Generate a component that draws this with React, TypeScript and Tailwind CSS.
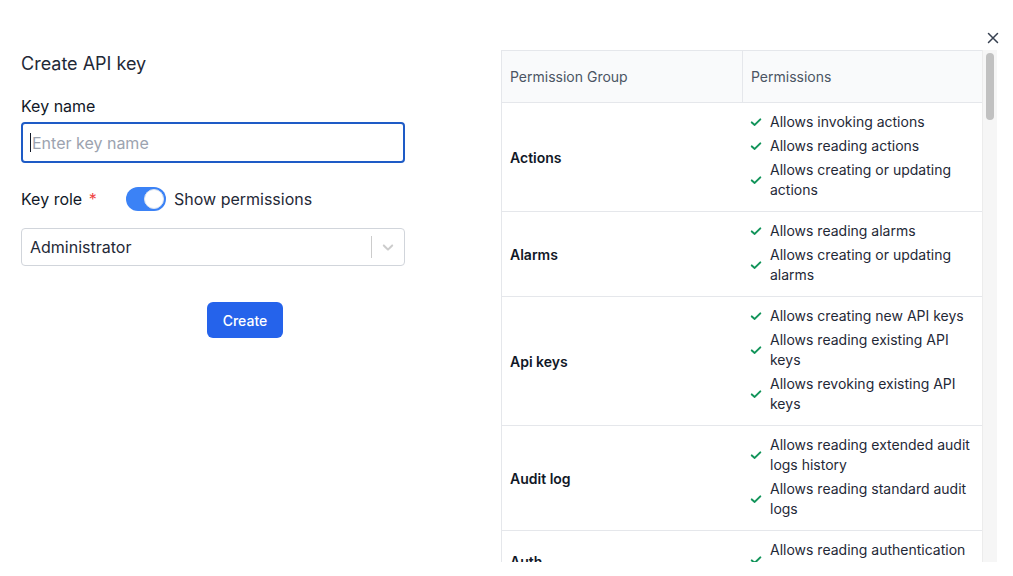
import React from "react";

const groups: { name: string; perms: string[] }[] = [
  {
    name: "Actions",
    perms: ["Allows invoking actions", "Allows reading actions", "Allows creating or updating actions"],
  },
  { name: "Alarms", perms: ["Allows reading alarms", "Allows creating or updating alarms"] },
  {
    name: "Api keys",
    perms: ["Allows creating new API keys", "Allows reading existing API keys", "Allows revoking existing API keys"],
  },
  {
    name: "Audit log",
    perms: ["Allows reading extended audit logs history", "Allows reading standard audit logs"],
  },
  { name: "Auth", perms: ["Allows reading authentication settings"] },
  { name: "Billing", perms: ["Allows reading billing information", "Allows updating billing information"] },
];

function Check() {
  return (
    <svg width="12" height="12" viewBox="0 0 12 12" className="shrink-0">
      <path d="M1.8 6.4 L4.7 8.9 L10.3 3.4" fill="none" stroke="#12945a" strokeWidth="2" strokeLinecap="round" strokeLinejoin="round" />
    </svg>
  );
}

export default function App() {
  return (
    <div
      className="relative w-[1013px] h-[576px] bg-white overflow-hidden text-[#1f2937]"
      style={{ fontFamily: "Inter, 'Noto Sans', sans-serif" }}
    >
      <button className="absolute left-[987px] top-[32px] w-3 h-3 flex items-center justify-center">
        <svg width="12" height="12" viewBox="0 0 12 12">
          <path d="M1.5 1.5 L10.5 10.5 M10.5 1.5 L1.5 10.5" stroke="#374151" strokeWidth="1.5" strokeLinecap="round" />
        </svg>
      </button>
      <div className="flex">
        <div className="w-[490px] shrink-0 pt-[50px]">
          <div className="pl-[21px] w-[405px]">
            <h2 className="text-[18px] leading-[28px] text-[#1f2937]">Create API key</h2>
            <div className="mt-[16px] text-[16px] leading-[24px] text-[#111827]">Key name</div>
            <div className="mt-1 h-[41px] w-[384px] rounded-[4px] border-2 border-[#1e5bc6] flex items-center pl-[7px]">
              <span className="w-px h-[19px] bg-[#111827] shrink-0" />
              <input
                className="flex-1 outline-none bg-transparent text-[16px] placeholder:text-[#9ca3af] pl-px"
                placeholder="Enter key name"
              />
            </div>
            <div className="mt-[24px] h-[24px] flex items-center">
              <div className="w-[105px] text-[16px] leading-[24px] text-[#111827] -mt-px">
                Key role <span className="text-[#ef4444] ml-[2px]">*</span>
              </div>
              <div className="w-[40px] h-[24px] rounded-full bg-[#3b82f6] flex items-center justify-end pr-[2px]">
                <div className="w-[20px] h-[20px] rounded-full bg-white border border-[#dbe3f0]" />
              </div>
              <span className="ml-2 text-[16px] leading-[24px] text-[#1f2937]">Show permissions</span>
            </div>
            <div className="mt-[17px] h-[38px] w-[384px] rounded-[4px] border border-[#d1d5db] flex items-center">
              <span className="flex-1 pl-[8px] text-[16px] text-[#1f2937]">Administrator</span>
              <span className="w-px h-[22px] bg-[#cccccc]" />
              <span className="w-[32px] flex items-center justify-center">
                <svg width="18" height="18" viewBox="0 0 20 20" fill="#cccccc">
                  <path d="M4.516 7.548c0.436-0.446 1.043-0.481 1.576 0l3.908 3.747 3.908-3.747c0.533-0.481 1.141-0.446 1.574 0 0.436 0.445 0.408 1.197 0 1.615-0.406 0.418-4.695 4.502-4.695 4.502-0.217 0.223-0.502 0.335-0.787 0.335s-0.57-0.112-0.789-0.335c0 0-4.287-4.084-4.695-4.502s-0.436-1.17 0-1.615z" />
                </svg>
              </span>
            </div>
          </div>
          <div className="mt-[36px] flex justify-center">
            <button className="w-[76px] h-[36px] rounded-[6px] bg-[#2563eb] text-white text-[14px] font-medium">
              Create
            </button>
          </div>
        </div>
        <div className="pl-[11px] pt-[50px]">
          <div className="flex h-[512px] w-[496px]">
            <div className="w-[481px] h-full overflow-hidden border-l border-t border-[#e5e7eb]">
              <div className="grid grid-cols-[240px_1fr] h-[52px] bg-[#f9fafb] border-b border-[#e5e7eb] text-[14px] text-[#4b5563]">
                <div className="flex items-center pl-2">Permission Group</div>
                <div className="flex items-center pl-2 border-l border-[#e5e7eb]">Permissions</div>
              </div>
              {groups.map((g) => (
                <div key={g.name} className="grid grid-cols-[240px_1fr] border-b border-[#e5e7eb]">
                  <div className="flex items-center pl-2 text-[14px] font-semibold text-[#111827]">{g.name}</div>
                  <div className="pt-[9px] pb-[11px] pl-2 pr-2 flex flex-col gap-1">
                    {g.perms.map((p) => (
                      <div key={p} className="flex items-center gap-2">
                        <Check />
                        <span className="text-[14px] leading-[20px] text-[#1f2937]">{p}</span>
                      </div>
                    ))}
                  </div>
                </div>
              ))}
            </div>
            <div className="w-[15px] h-full bg-[#f6f6f6] border-l border-[#ececec] flex justify-center pt-[3px]">
              <div className="w-[8px] h-[67px] rounded-full bg-[#c1c1c1]" />
            </div>
          </div>
        </div>
      </div>
    </div>
  );
}
